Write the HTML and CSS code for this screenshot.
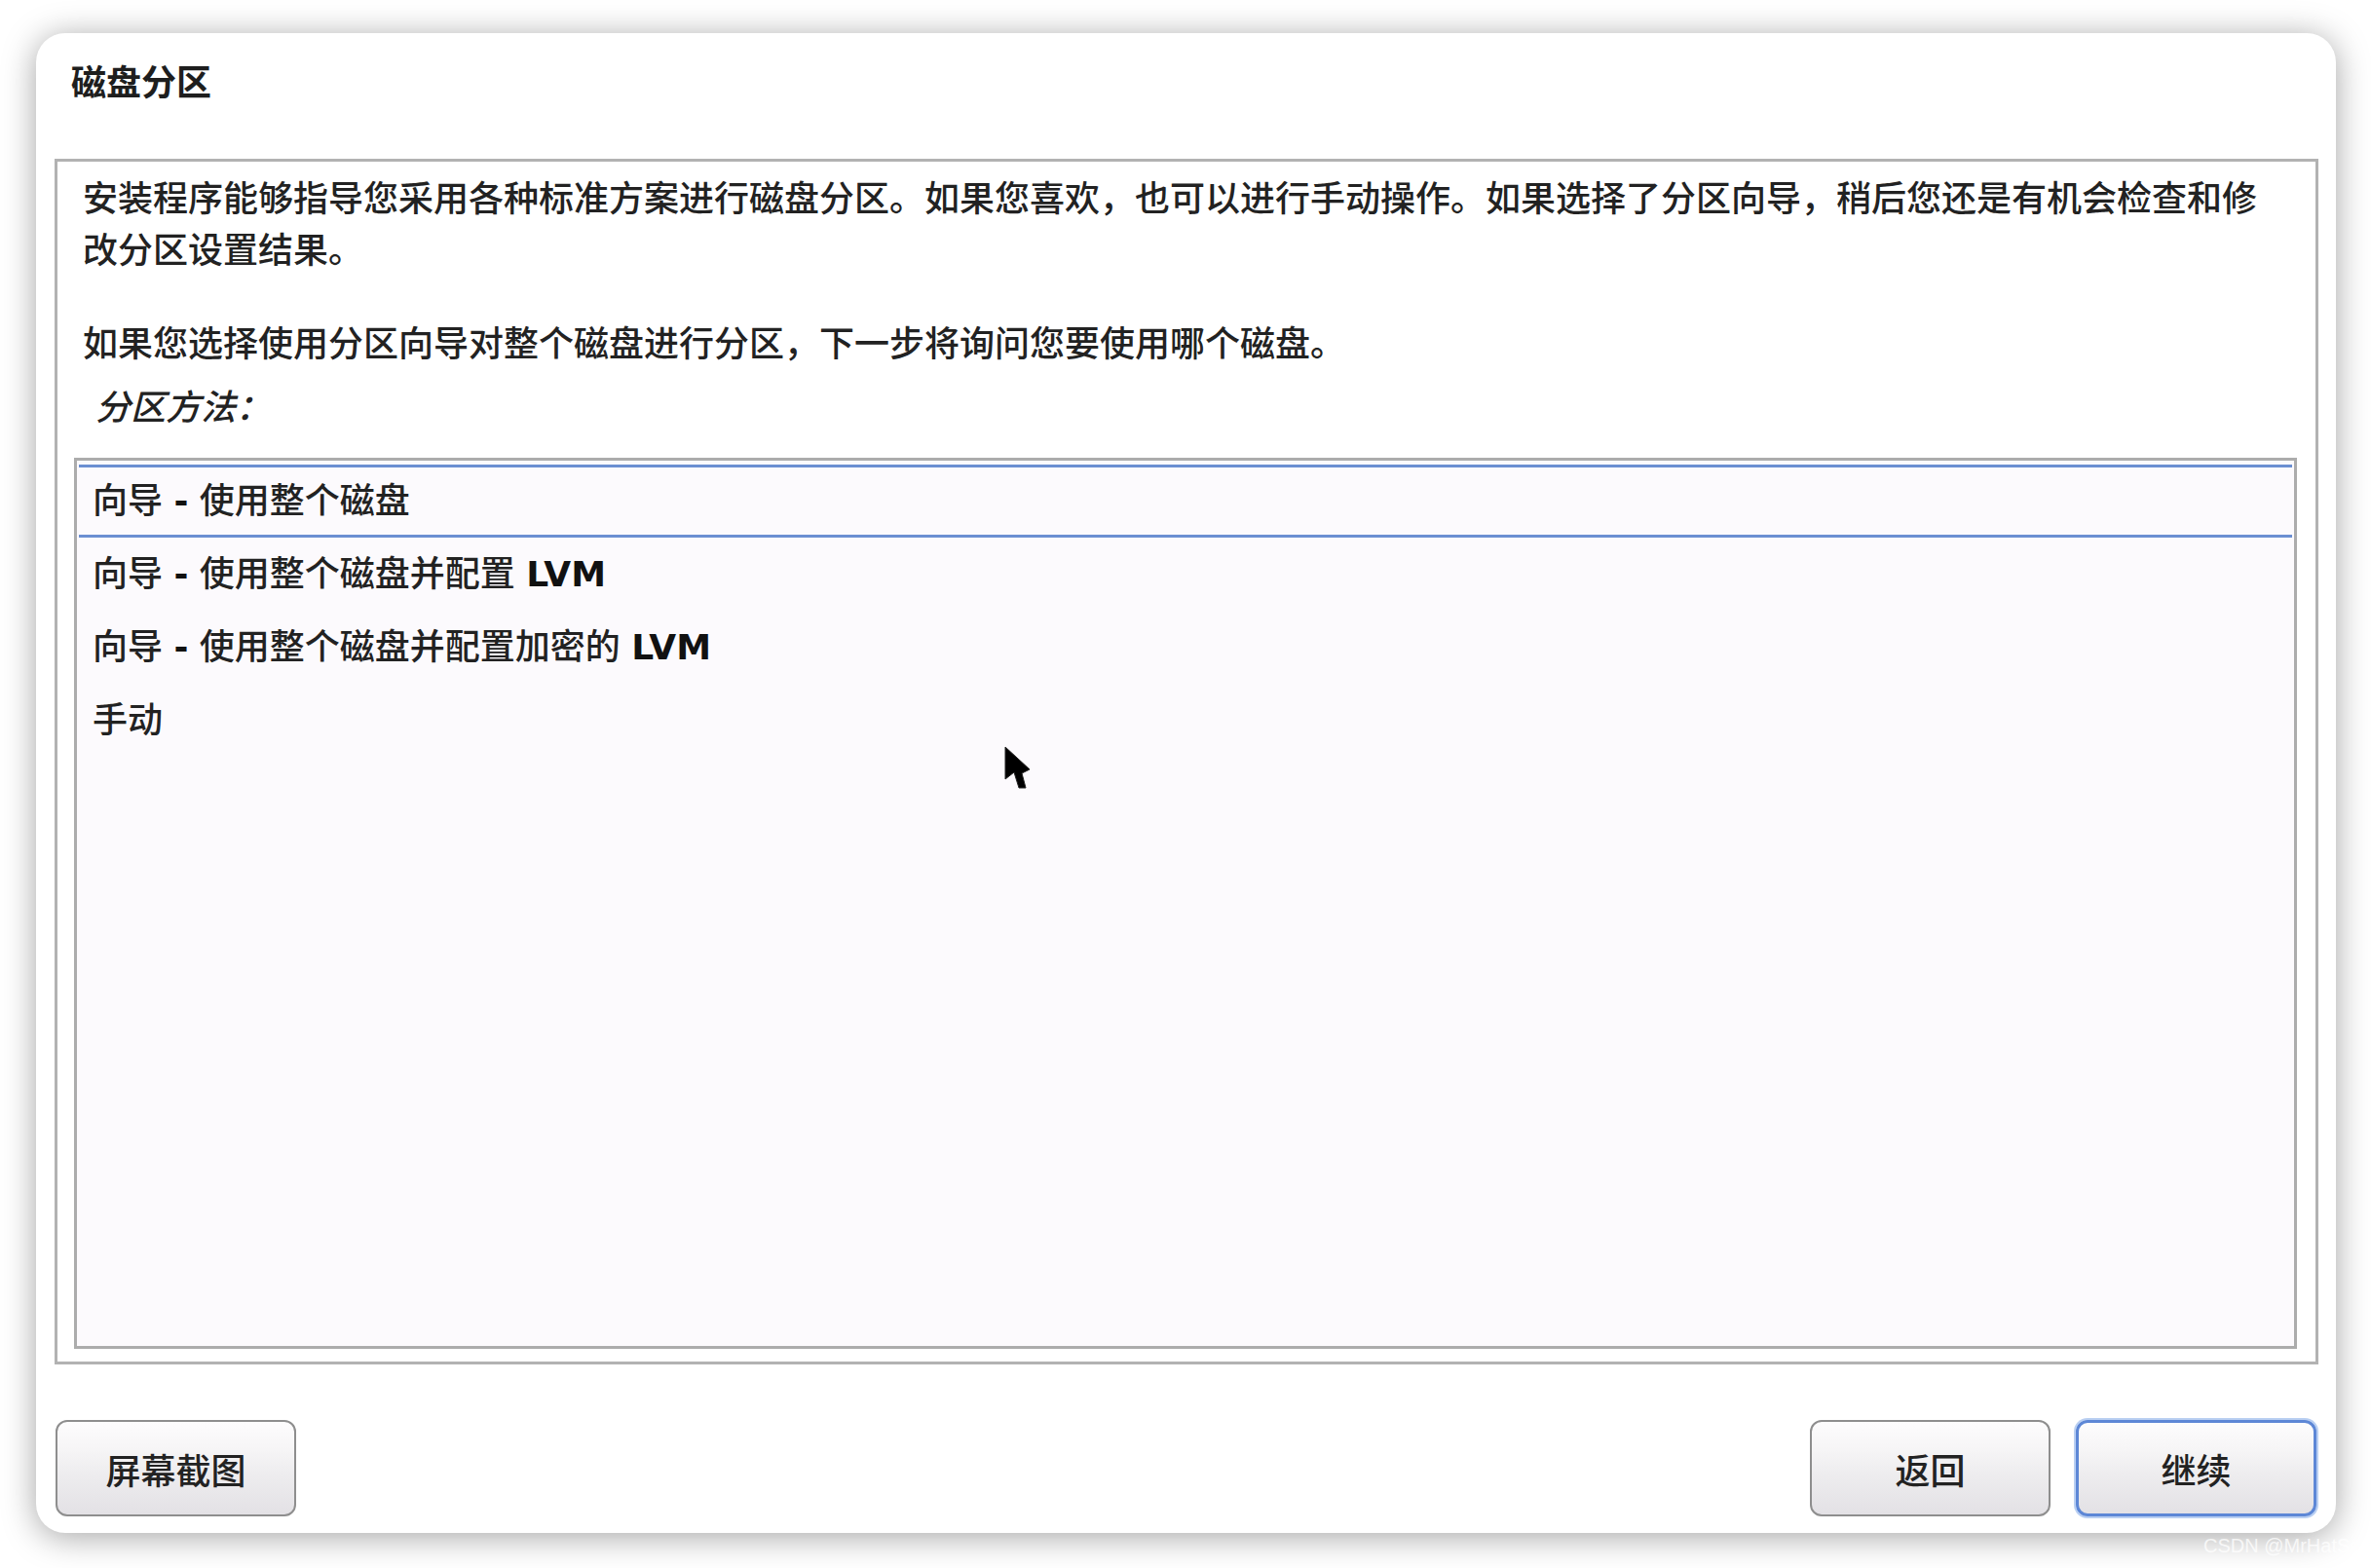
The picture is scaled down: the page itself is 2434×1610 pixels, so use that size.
FILE: index.html
```html
<!DOCTYPE html>
<html lang="zh-CN">
<head>
  <meta charset="UTF-8">
  <meta name="viewport" content="width=device-width, initial-scale=1.0">
  <title>磁盘分区</title>
  <link rel="stylesheet" href="styles.css">
</head>
<body>
  <div class="window">
    <h1 class="title">磁盘分区</h1>

    <div class="content-box">
      <p class="intro-text">安装程序能够指导您采用各种标准方案进行磁盘分区。如果您喜欢，也可以进行手动操作。如果选择了分区向导，稍后您还是有机会检查和修改分区设置结果。</p>
      <p class="intro-text second">如果您选择使用分区向导对整个磁盘进行分区，下一步将询问您要使用哪个磁盘。</p>
      <p class="method-label">分区方法：</p>

      <ul class="method-list">
        <li class="method-item selected">向导 <b>-</b> 使用整个磁盘</li>
        <li class="method-item">向导 <b>-</b> 使用整个磁盘并配置 <b>LVM</b></li>
        <li class="method-item">向导 <b>-</b> 使用整个磁盘并配置加密的 <b>LVM</b></li>
        <li class="method-item">手动</li>
      </ul>
    </div>

    <div class="button-bar">
      <button class="btn">屏幕截图</button>
      <div class="btn-group">
        <button class="btn">返回</button>
        <button class="btn focused">继续</button>
      </div>
    </div>
  </div>

  <!-- mouse pointer -->
  <svg class="cursor" width="27" height="45" viewBox="0 0 27 45">
    <path d="M1 1 L1 34 L10 27 L15 43 L22 43 L18 28 L26 24 Z" fill="#000" stroke="#222" stroke-width="1"/>
  </svg>

  <div class="watermark">CSDN @MrHatSec</div>
</body>
</html>
```

FILE: styles.css
```css
body{
  margin: 0;
  background-color: #fff;
  font-family: "DejaVu Sans", "Noto Sans CJK SC", sans-serif;
  color: #222;
  height: 1610px;
  overflow: hidden;
}

.window{
  margin: 34px 0 0 37px;
  width: 2361px;
  height: 1540px;
  box-sizing: border-box;
  background-color: #fff;
  border-radius: 30px;
  box-shadow: 0 4px 34px rgba(0, 0, 0, 0.36);
  padding-top: 26px;
}

.title{
  margin: 0 0 59px 36px;
  font-size: 36px;
  line-height: 44px;
  font-weight: bold;
  font-family: "Noto Sans CJK SC", sans-serif;
  color: #1e1e1e;
}

.content-box{
  margin: 0 18px 0 19px;
  border: 3px solid #b2b2b2;
  padding: 12px 19px 13px 17px;
}

.intro-text{
  margin: 0;
  padding: 0 23px 0 9px;
  font-size: 36px;
  line-height: 53px;
  font-weight: 500;
}

.intro-text.second{
  margin-top: 43px;
}

.method-label{
  margin: 12px 0 25px 0;
  padding-left: 22px;
  font-size: 36px;
  line-height: 53px;
  font-style: italic;
  font-weight: 500;
}

.method-list{
  list-style: none;
  margin: 0;
  height: 915px;
  box-sizing: border-box;
  padding: 4px 2px;
  border: 3px solid #acacac;
  background-color: #fcfafd;
}

.method-item{
  height: 75px;
  box-sizing: border-box;
  padding-left: 14px;
  font-size: 36px;
  line-height: 75px;
  font-weight: 500;
  white-space: nowrap;
}

.method-item.selected{
  border-top: 3px solid #6b8fd2;
  border-bottom: 3px solid #6b8fd2;
  line-height: 69px;
}

.method-item b{
  font-weight: bold;
  color: #111;
}

.button-bar{
  display: flex;
  justify-content: space-between;
  margin-top: 57px;
  padding: 0 20px 0 20px;
}

.btn-group{
  display: flex;
  gap: 26px;
}

.btn{
  width: 247px;
  height: 99px;
  border: 2px solid #8e8e8e;
  border-radius: 12px;
  background: linear-gradient(#fdfcfd 0%, #f6f5f6 30%, #eeedef 55%, #e3e1e5 100%);
  font-family: "Noto Sans CJK SC", sans-serif;
  font-size: 36px;
  font-weight: 500;
  color: #222;
  padding: 0;
}

.btn.focused{
  border: 3px solid #5d87d6;
  box-shadow: 0 0 0 2px #b9cff2;
}

.cursor{
  position: absolute;
  left: 1031px;
  top: 766px;
}

.watermark{
  position: absolute;
  left: 2262px;
  top: 1576px;
  font-family: "Liberation Sans", sans-serif;
  font-size: 20px;
  color: rgba(255, 255, 255, 0.75);
}
```
